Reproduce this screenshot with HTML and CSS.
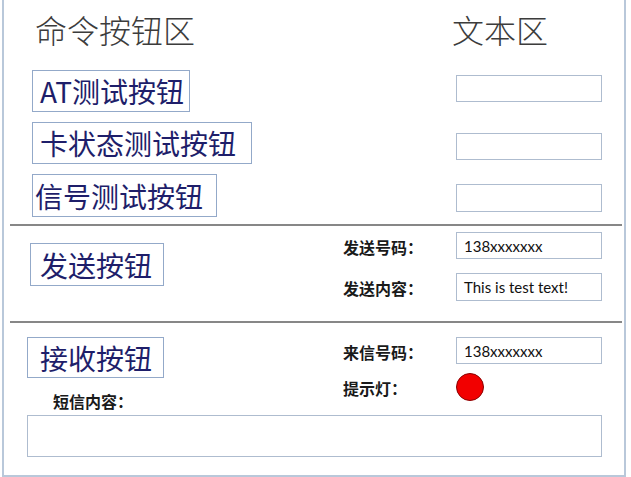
FILE: index.html
```html
<!DOCTYPE html>
<html lang="zh-CN">
<head>
<meta charset="utf-8">
<title>短信测试界面</title>
<link rel="stylesheet" href="styles.css">
</head>
<body>
<div class="frame">
  <section class="sec sec-cmd">
    <div class="col-left">
      <h1 class="title">命令按钮区</h1>
      <div class="btn btn-at">AT测试按钮</div>
      <div class="btn btn-card">卡状态测试按钮</div>
      <div class="btn btn-signal">信号测试按钮</div>
    </div>
    <div class="col-right">
      <h1 class="title title-text">文本区</h1>
      <div class="field field-1"></div>
      <div class="field field-2"></div>
      <div class="field field-3"></div>
    </div>
  </section>
  <div class="divider"></div>
  <section class="sec sec-send">
    <div class="btn btn-send">发送按钮</div>
    <div class="form form-send">
      <span class="lbl">发送号码：</span>
      <div class="field field-num">138xxxxxxx</div>
      <span class="lbl">发送内容：</span>
      <div class="field field-msg">This is test text!</div>
    </div>
  </section>
  <div class="divider"></div>
  <section class="sec sec-recv">
    <div class="recv-top">
      <div class="recv-left">
        <div class="btn btn-recv">接收按钮</div>
        <span class="lbl lbl-sms">短信内容：</span>
      </div>
      <div class="form form-recv">
        <span class="lbl">来信号码：</span>
        <div class="field field-num">138xxxxxxx</div>
        <span class="lbl">提示灯：</span>
        <div class="lamp-cell"><span class="lamp"></span></div>
      </div>
    </div>
    <div class="sms-box"></div>
  </section>
</div>
</body>
</html>
```

FILE: styles.css
```css
* { box-sizing: border-box; }

html, body {
  margin: 0;
  padding: 0;
  background: #ffffff;
}

body {
  font-family: "Noto Sans CJK SC", "Noto Sans", sans-serif;
  width: 631px;
  height: 477px;
  overflow: hidden;
}

.frame {
  margin-left: 2px;
  width: 624px;
  height: 477px;
  border-left: 2px solid #b9c8da;
  border-right: 2px solid #b9c8da;
  border-bottom: 2px solid #b9c8da;
  display: flex;
  flex-direction: column;
}

.sec { display: flex; }

.title {
  margin: 0;
  font-size: 32px;
  line-height: 32px;
  font-weight: 300;
  color: #3c3c3c;
  white-space: nowrap;
}

/* ---------- command area ---------- */
.sec-cmd {
  height: 224px;
  padding-top: 13px;
}

.col-left {
  display: flex;
  flex-direction: column;
  align-items: flex-start;
  padding-left: 28px;
}

.col-left .title { margin-left: 3px; }

.col-right {
  margin-left: auto;
  margin-right: 22px;
  width: 146px;
  display: flex;
  flex-direction: column;
}

.title-text { margin-left: -4px; }

.btn {
  display: flex;
  align-items: center;
  height: 42px;
  border: 1px solid #93a9c9;
  background: #ffffff;
  color: #1e1e6a;
  font-size: 28px;
  line-height: 28px;
  white-space: nowrap;
}

.btn-at { margin-top: 25px; width: 158px; padding-left: 7px; }
.btn-card { margin-top: 10px; width: 220px; padding-left: 7px; }
.btn-signal { margin-top: 10px; width: 185px; padding-left: 2px; height: 43px; }

.field {
  height: 27px;
  border: 1px solid #aebccf;
  background: #ffffff;
  font-family: "Lato", "Open Sans", sans-serif;
  font-size: 15px;
  color: #111111;
  padding-left: 7px;
  display: flex;
  align-items: center;
  white-space: nowrap;
}

.field-1 { margin-top: 30px; }
.field-2 { margin-top: 31px; }
.field-3 { margin-top: 24px; height: 28px; }

.divider {
  flex: none;
  height: 2px;
  margin: 0 2px 0 6px;
  background: #878787;
}

/* ---------- send area ---------- */
.sec-send {
  height: 95px;
  align-items: flex-start;
}

.btn-send {
  margin-top: 17px;
  margin-left: 26px;
  width: 134px;
  height: 43px;
  padding-left: 9px;
}

.form {
  margin-left: auto;
  margin-right: 22px;
  display: grid;
  grid-template-columns: 113px 146px;
  align-items: center;
}

.form-send {
  padding-top: 6px;
  row-gap: 14px;
}

.field-msg { height: 28px; }

.lbl {
  font-size: 16px;
  line-height: 16px;
  font-weight: 700;
  color: #1a1a1a;
  white-space: nowrap;
  padding-top: 2px;
}

/* ---------- receive area ---------- */
.sec-recv {
  flex-direction: column;
}

.recv-top {
  display: flex;
  align-items: flex-start;
}

.recv-left {
  margin-left: 23px;
  display: flex;
  flex-direction: column;
  align-items: flex-start;
}

.btn-recv {
  margin-top: 14px;
  width: 137px;
  height: 41px;
  padding-left: 12px;
}

.lbl-sms {
  margin-top: 15px;
  margin-left: 26px;
  padding-top: 0;
}

.form-recv {
  padding-top: 14px;
  row-gap: 9px;
}

.lamp-cell { display: flex; }

.lamp {
  width: 28px;
  height: 28px;
  border-radius: 50%;
  background: #f20000;
  border: 1px solid #8a0000;
}

.sms-box {
  margin: 6px 22px 0 23px;
  height: 42px;
  border: 1px solid #aebccf;
  background: #ffffff;
}
```
